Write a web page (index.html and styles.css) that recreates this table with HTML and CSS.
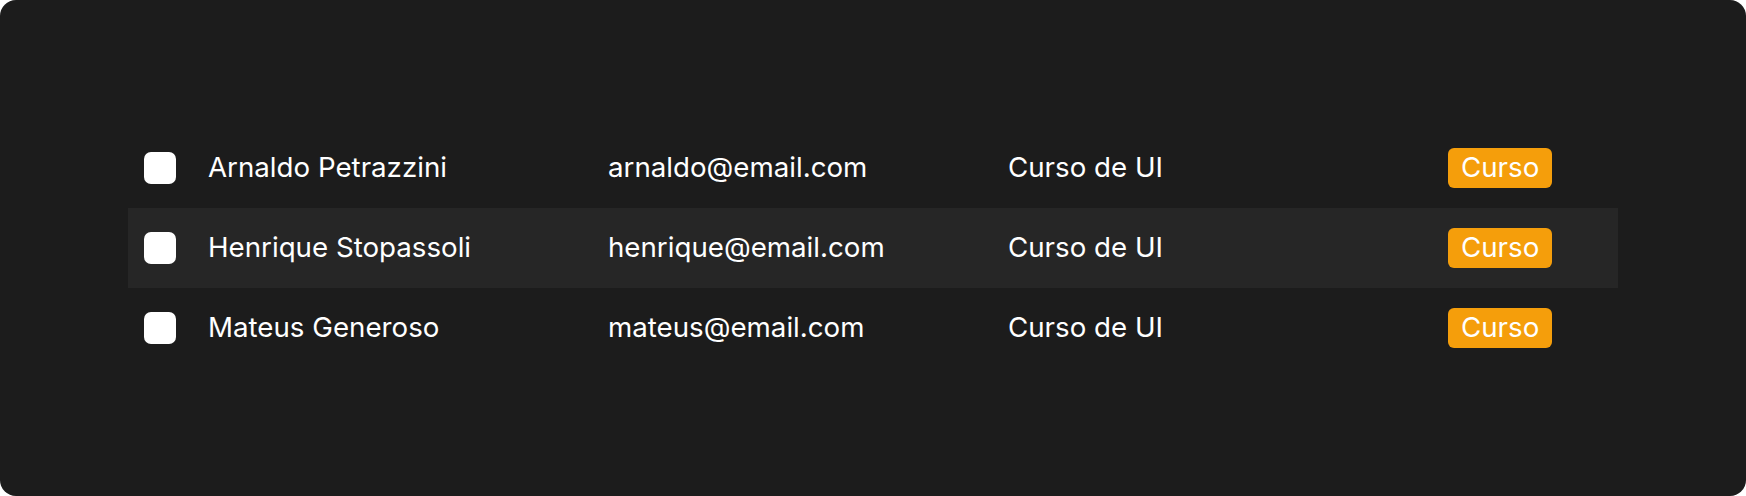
FILE: index.html
```html
<!DOCTYPE html>
<html>
<head>
  <title>Alunos</title>
  <link rel="stylesheet" href="styles.css">
</head>
<body>
  <div class="card">
    <div class="table">
      <div class="row">
        <span class="check"></span>
        <span class="cell">Arnaldo Petrazzini</span>
        <span class="cell">arnaldo@email.com</span>
        <span class="cell">Curso de UI</span>
        <span class="tag-cell"><span class="badge">Curso</span></span>
      </div>
      <div class="row active">
        <span class="check"></span>
        <span class="cell">Henrique Stopassoli</span>
        <span class="cell">henrique@email.com</span>
        <span class="cell">Curso de UI</span>
        <span class="tag-cell"><span class="badge">Curso</span></span>
      </div>
      <div class="row">
        <span class="check"></span>
        <span class="cell">Mateus Generoso</span>
        <span class="cell">mateus@email.com</span>
        <span class="cell">Curso de UI</span>
        <span class="tag-cell"><span class="badge">Curso</span></span>
      </div>
    </div>
  </div>
</body>
</html>
```

FILE: styles.css
```css
html, body {
  margin: 0;
  background: #ffffff;
}
body {
  font-family: Inter, "Noto Sans", sans-serif;
}
.card {
  width: 1746px;
  height: 496px;
  box-sizing: border-box;
  background: #1c1c1c;
  border-radius: 16px;
  padding: 128px;
  display: flex;
  flex-direction: column;
  justify-content: center;
}
.table {
  display: flex;
  flex-direction: column;
}
.row {
  display: grid;
  grid-template-columns: 64px 400px 400px 440px auto;
  align-items: center;
  height: 80px;
  padding-left: 16px;
  color: #ffffff;
  font-size: 27.7px;
}
.row.active {
  background: #262626;
}
.check {
  width: 32px;
  height: 32px;
  background: #ffffff;
  border-radius: 7px;
}
.cell {
  white-space: nowrap;
  padding-bottom: 2px;
}
.tag-cell {
  display: flex;
}
.badge {
  background: #f59e0b;
  color: #ffffff;
  border-radius: 6px;
  padding: 0 13px;
  height: 40px;
  line-height: 39px;
}
```
